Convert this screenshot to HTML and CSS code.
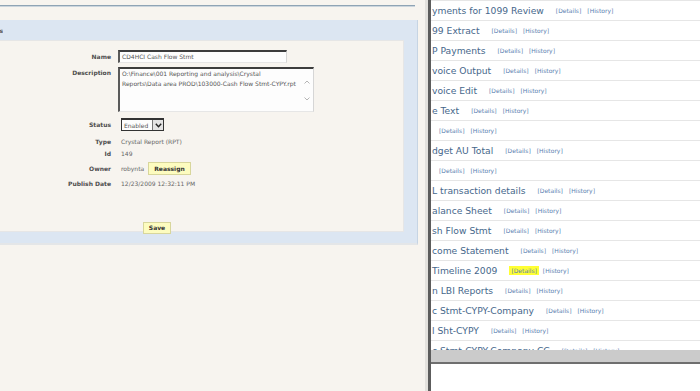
FILE: index.html
```html
<!DOCTYPE html>
<html>
<head>
    <title>Document Properties</title>
    <link rel="stylesheet" href="styles.css">
</head>
<body>
    <div class="left-pane">
        <div class="top-rule"></div>

        <div class="panel">
            <div class="panel-header">
                <span class="panel-title"><span>Properties</span></span>
            </div>
            <div class="panel-body">
                <div class="form">
                    <div class="form-row row-name">
                        <label>Name</label>
                        <div class="text-input">CD4HCI Cash Flow Stmt</div>
                    </div>
                    <div class="form-row row-desc">
                        <label>Description</label>
                        <div class="text-area">
                            <div class="text-area-content">O:\Finance\001 Reporting and analysis\Crystal<br>Reports\Data area PROD\103000-Cash Flow Stmt-CYPY.rpt</div>
                            <div class="text-area-scroll">
                                <svg width="6" height="4" viewBox="0 0 6 4"><path d="M0.5 3.5 L3 1 L5.5 3.5" fill="none" stroke="#b5b5b5" stroke-width="1"/></svg>
                                <svg width="6" height="4" viewBox="0 0 6 4"><path d="M0.5 0.5 L3 3 L5.5 0.5" fill="none" stroke="#b5b5b5" stroke-width="1"/></svg>
                            </div>
                        </div>
                    </div>
                    <div class="form-row row-status">
                        <label>Status</label>
                        <div class="select">
                            <span class="select-value">Enabled</span>
                            <span class="select-arrow">
                                <svg width="7" height="5" viewBox="0 0 7 5"><path d="M0.8 0.8 L3.5 3.8 L6.2 0.8" fill="none" stroke="#222" stroke-width="1.4"/></svg>
                            </span>
                        </div>
                    </div>
                    <div class="form-row row-type">
                        <label>Type</label>
                        <span class="value">Crystal Report (RPT)</span>
                    </div>
                    <div class="form-row row-id">
                        <label>Id</label>
                        <span class="value">149</span>
                    </div>
                    <div class="form-row row-owner">
                        <label>Owner</label>
                        <span class="value">robynta</span>
                        <button class="btn">Reassign</button>
                    </div>
                    <div class="form-row row-date">
                        <label>Publish Date</label>
                        <span class="value">12/23/2009 12:32:11 PM</span>
                    </div>
                    <div class="form-actions">
                        <button class="btn">Save</button>
                    </div>
                </div>
            </div>
        </div>
    </div>

    <div class="divider"></div>

    <div class="right-pane">
        <div class="report-list">
            <div class="report-row"><span class="report-name">yments for 1099 Review</span><a class="link first">[Details]</a><a class="link">[History]</a></div>
            <div class="report-row"><span class="report-name">99 Extract</span><a class="link first">[Details]</a><a class="link">[History]</a></div>
            <div class="report-row"><span class="report-name">P Payments</span><a class="link first">[Details]</a><a class="link">[History]</a></div>
            <div class="report-row"><span class="report-name">voice Output</span><a class="link first">[Details]</a><a class="link">[History]</a></div>
            <div class="report-row"><span class="report-name">voice Edit</span><a class="link first">[Details]</a><a class="link">[History]</a></div>
            <div class="report-row"><span class="report-name">e Text</span><a class="link first">[Details]</a><a class="link">[History]</a></div>
            <div class="report-row"><a class="link first no-name">[Details]</a><a class="link">[History]</a></div>
            <div class="report-row"><span class="report-name">dget AU Total</span><a class="link first">[Details]</a><a class="link">[History]</a></div>
            <div class="report-row"><a class="link first no-name">[Details]</a><a class="link">[History]</a></div>
            <div class="report-row"><span class="report-name">L transaction details</span><a class="link first">[Details]</a><a class="link">[History]</a></div>
            <div class="report-row"><span class="report-name">alance Sheet</span><a class="link first">[Details]</a><a class="link">[History]</a></div>
            <div class="report-row"><span class="report-name">sh Flow Stmt</span><a class="link first">[Details]</a><a class="link">[History]</a></div>
            <div class="report-row"><span class="report-name">come Statement</span><a class="link first">[Details]</a><a class="link">[History]</a></div>
            <div class="report-row"><span class="report-name">Timeline 2009</span><a class="link first highlight">[Details]</a><a class="link">[History]</a></div>
            <div class="report-row"><span class="report-name">n LBI Reports</span><a class="link first">[Details]</a><a class="link">[History]</a></div>
            <div class="report-row"><span class="report-name">c Stmt-CYPY-Company</span><a class="link first">[Details]</a><a class="link">[History]</a></div>
            <div class="report-row"><span class="report-name">l Sht-CYPY</span><a class="link first">[Details]</a><a class="link">[History]</a></div>
            <div class="report-row"><span class="report-name">c Stmt-CYPY-Company CC</span><a class="link first">[Details]</a><a class="link">[History]</a></div>
        </div>
        <div class="h-scroll"></div>
    </div>
</body>
</html>
```

FILE: styles.css
```css
body {
    margin: 0;
    display: flex;
    height: 391px;
    overflow: hidden;
    font-family: "DejaVu Sans", Verdana, sans-serif;
    background: #fff;
}

/* left window */
.left-pane {
    width: 425px;
    flex-shrink: 0;
    padding-top: 5px;
    background: #f7f4ef;
    border-right: 3px solid #e3e1dd;
}
.top-rule {
    width: 415px;
    height: 1px;
    background: #8fa4b5;
    border-bottom: 1px solid #cbd5dd;
    margin-bottom: 13px;
}
.panel {
    width: 417px;
    background: #dce6f2;
    border-right: 1px solid #c6d4e3;
    border-bottom: 2px solid #e4e6e8;
    padding-bottom: 11px;
}
.panel-header {
    height: 20px;
    display: flex;
    align-items: center;
}
.panel-title {
    width: 3px;
    overflow: hidden;
    display: flex;
    justify-content: flex-end;
    font-size: 6px;
    font-weight: bold;
    color: #555;
    white-space: nowrap;
}
.panel-body {
    margin-right: 13px;
    height: 190px;
    background: #f7f4ef;
    border: 1px solid #e6e6e6;
    border-left: none;
}
.form {
    width: 314px;
    padding-top: 9px;
}
.form-row {
    display: flex;
    align-items: center;
    font-size: 6px;
}
.form-row label {
    width: 111px;
    margin-right: 7px;
    flex-shrink: 0;
    text-align: right;
    font-weight: bold;
    color: #4d4d4d;
}
.value {
    padding-left: 3px;
    color: #666;
}
.row-name { height: 13px; }
.row-desc { height: 45px; margin-top: 4px; align-items: flex-start; }
.row-desc label { padding-top: 2px; }
.row-status { height: 13px; margin-top: 6px; }
.row-type { height: 12px; margin-top: 4px; }
.row-id { height: 12px; }
.row-owner { height: 14px; margin-top: 2px; }
.row-date { height: 12px; margin-top: 2px; }

.text-input {
    width: 164px;
    height: 10px;
    line-height: 10px;
    padding-left: 2px;
    background: #fdfdfd;
    border-top: 2px solid #3d3d3d;
    border-left: 2px solid #5a5a5a;
    border-right: 1px solid #d6d6d6;
    border-bottom: 1px solid #e6e6e6;
    color: #555;
}
.text-area {
    width: 196px;
    height: 42px;
    display: flex;
    background: #fdfdfd;
    border-top: 2px solid #3d3d3d;
    border-left: 2px solid #5a5a5a;
    border-right: 1px solid #d6d6d6;
    border-bottom: 1px solid #e6e6e6;
    color: #555;
}
.text-area-content {
    flex: 1;
    padding: 0 0 0 2px;
    line-height: 10px;
    white-space: nowrap;
    overflow: hidden;
}
.text-area-scroll {
    width: 12px;
    display: flex;
    flex-direction: column;
    align-items: center;
    justify-content: center;
    gap: 13px;
}
.select {
    margin-left: 3px;
    width: 41px;
    height: 10px;
    display: flex;
    align-items: center;
    justify-content: space-between;
    border: 1px solid #333;
    border-top-width: 2px;
    background: #fdfdfd;
}
.select-value {
    padding-left: 2px;
    color: #555;
}
.select-arrow {
    width: 10px;
    height: 10px;
    display: flex;
    align-items: center;
    justify-content: center;
    background: #e4e4e4;
    border-left: 1px solid #777;
}
.btn {
    height: 13px;
    padding: 0 5px;
    margin-left: 4px;
    font-family: "DejaVu Sans", Verdana, sans-serif;
    font-size: 6px;
    font-weight: bold;
    color: #333;
    background: #fdfcbf;
    border: 1px solid #d8d69c;
    border-radius: 0;
}
.form-actions {
    margin-top: 26px;
    text-align: center;
}
.form-actions .btn {
    margin-left: 0;
    height: 12px;
}

.divider {
    width: 3px;
    flex-shrink: 0;
    background: #5c5c5c;
}

/* right window */
.right-pane {
    flex: 1;
    display: flex;
    flex-direction: column;
    background: #fff;
}
.report-list {
    height: 349px;
    overflow: hidden;
    border-top: 1px solid #e6e6e6;
}
.report-row {
    height: 19px;
    display: flex;
    align-items: center;
    padding-left: 1px;
    white-space: nowrap;
    border-bottom: 1px solid #e6e6e6;
}
.report-name {
    font-size: 9.2px;
    color: #46678b;
}
.link {
    font-size: 6px;
    color: #5a80b0;
    margin-left: 6px;
}
.link.first {
    margin-left: 12px;
}
.link.no-name {
    margin-left: 7px;
}
.highlight {
    background: #ffff33;
    padding: 1px 2px;
    margin-left: 10px;
    margin-right: -2px;
}
.h-scroll {
    height: 12px;
    background: #cbcbcb;
    border-bottom: 2px solid #6e6e6e;
}
```
